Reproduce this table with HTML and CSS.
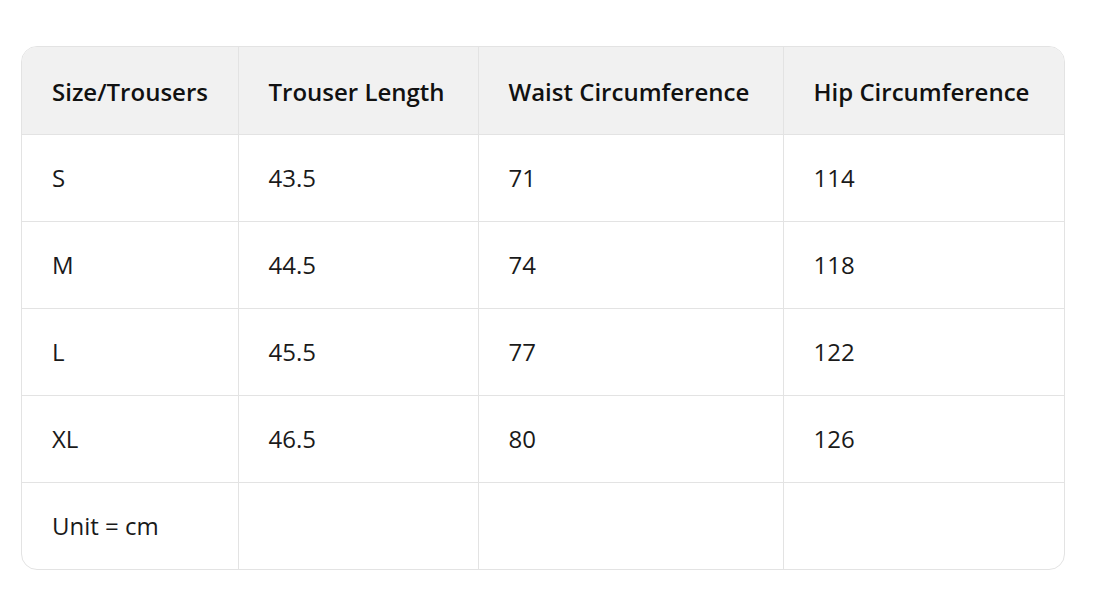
FILE: index.html
```html
<!DOCTYPE html>
<html>
<head>
<meta charset="utf-8">
<link rel="stylesheet" href="styles.css">
</head>
<body>
<div class="page">
  <div class="table-wrap">
    <table class="size-table">
      <colgroup>
        <col class="c1"><col class="c2"><col class="c3"><col class="c4">
      </colgroup>
      <thead>
        <tr><th>Size/Trousers</th><th>Trouser Length</th><th>Waist Circumference</th><th>Hip Circumference</th></tr>
      </thead>
      <tbody>
        <tr><td>S</td><td>43.5</td><td>71</td><td>114</td></tr>
        <tr><td>M</td><td>44.5</td><td>74</td><td>118</td></tr>
        <tr><td>L</td><td>45.5</td><td>77</td><td>122</td></tr>
        <tr><td>XL</td><td>46.5</td><td>80</td><td>126</td></tr>
        <tr><td>Unit = cm</td><td></td><td></td><td></td></tr>
      </tbody>
    </table>
  </div>
</div>
</body>
</html>
```
FILE: styles.css
```css
html, body {
  margin: 0;
  padding: 0;
  background: #ffffff;
}
.page {
  padding: 46px 0 0 21px;
}
.table-wrap {
  width: 1044px;
  border: 1px solid #e3e3e3;
  border-radius: 16px;
  overflow: hidden;
  box-sizing: border-box;
}
.size-table {
  width: 100%;
  border-collapse: collapse;
  table-layout: fixed;
  font-family: "Open Sans", "Noto Sans", sans-serif;
  font-size: 24px;
  color: #1a1a1a;
}
.c1 { width: 216px; }
.c2 { width: 240px; }
.c3 { width: 305px; }
.c4 { width: auto; }
.size-table th,
.size-table td {
  height: 87px;
  padding: 0 0 0 30px;
  text-align: left;
  vertical-align: middle;
  border-right: 1px solid #e3e3e3;
  border-bottom: 1px solid #e3e3e3;
  box-sizing: border-box;
}
.size-table th {
  padding-top: 3px;
}
.size-table td {
  padding-top: 0;
}
.size-table th:last-child,
.size-table td:last-child { border-right: none; }
.size-table tbody tr:last-child td { border-bottom: none; }
.size-table th {
  background: #f1f1f1;
  font-weight: 600;
  color: #111;
}
```
